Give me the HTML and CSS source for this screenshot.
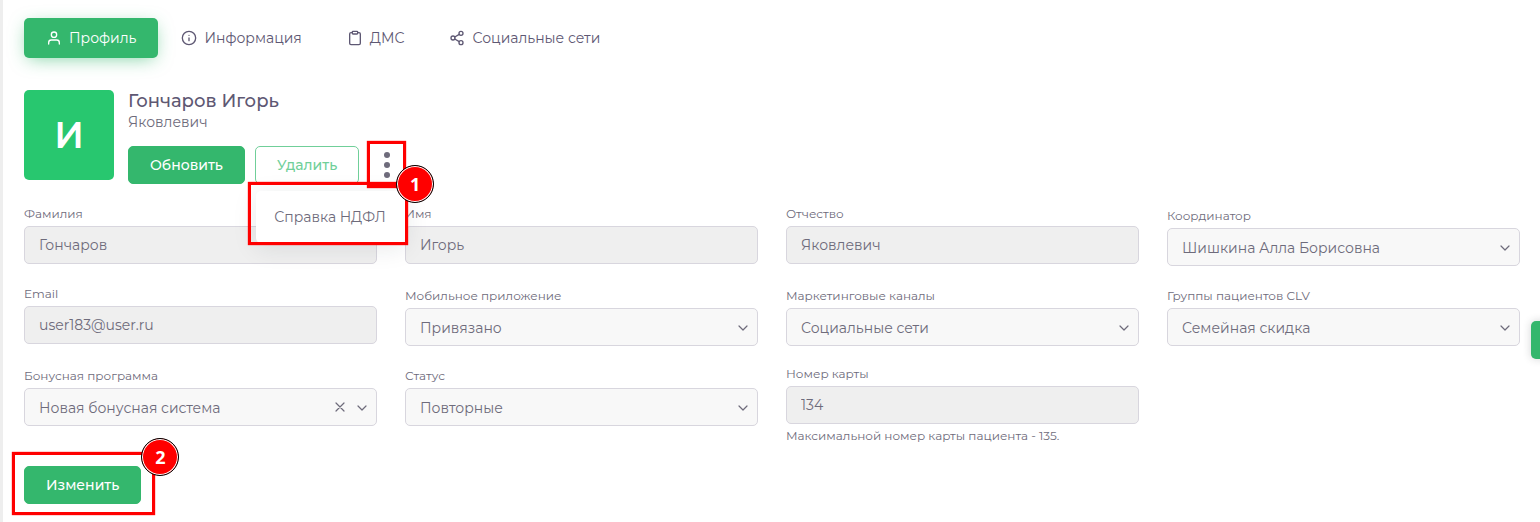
FILE: index.html
```html
<!DOCTYPE html>
<html lang="ru">
<head>
    <meta charset="UTF-8">
    <meta name="viewport" content="width=device-width, initial-scale=1.0">
    <title>Профиль пациента</title>
    <link rel="stylesheet" href="styles.css">
</head>
<body>

    <main class="page">
        <nav class="tabs">
            <a href="#profile" class="tab active">
                <svg class="icon" viewBox="0 0 24 24"><path d="M20 21v-2a4 4 0 0 0-4-4H8a4 4 0 0 0-4 4v2"/><circle cx="12" cy="7" r="4"/></svg>
                Профиль
            </a>
            <a href="#info" class="tab">
                <svg class="icon" viewBox="0 0 24 24"><circle cx="12" cy="12" r="10"/><path d="M12 16v-4M12 8h.01"/></svg>
                Информация
            </a>
            <a href="#dms" class="tab">
                <svg class="icon" viewBox="0 0 24 24"><path d="M16 4h2a2 2 0 0 1 2 2v14a2 2 0 0 1-2 2H6a2 2 0 0 1-2-2V6a2 2 0 0 1 2-2h2"/><rect x="8" y="2" width="8" height="4" rx="1"/></svg>
                ДМС
            </a>
            <a href="#social" class="tab">
                <svg class="icon" viewBox="0 0 24 24"><circle cx="18" cy="5" r="3"/><circle cx="6" cy="12" r="3"/><circle cx="18" cy="19" r="3"/><path d="M8.59 13.51l6.83 3.98M15.41 6.51l-6.82 3.98"/></svg>
                Социальные сети
            </a>
        </nav>

        <header class="user">
            <div class="avatar">И</div>
            <div class="user-info">
                <h1>Гончаров Игорь</h1>
                <p>Яковлевич</p>
                <div class="actions">
                    <button type="button" class="btn">Обновить</button>
                    <button type="button" class="btn btn-outline">Удалить</button>
                    <div class="more">
                        <button type="button" class="dots" aria-label="Ещё">
                            <svg viewBox="0 0 8 28"><circle cx="4" cy="4" r="3"/><circle cx="4" cy="14" r="3"/><circle cx="4" cy="24" r="3"/></svg>
                        </button>
                        <div class="menu">
                            <a href="#ndfl">Справка НДФЛ</a>
                        </div>
                        <span class="mark mark-dots"></span>
                        <span class="mark mark-menu"></span>
                        <span class="step step-1">1</span>
                    </div>
                </div>
            </div>
        </header>

        <form>
            <div class="fields">
                <div class="field">
                    <label for="surname">Фамилия</label>
                    <input type="text" id="surname" value="Гончаров" disabled>
                </div>
                <div class="field">
                    <label for="name">Имя</label>
                    <input type="text" id="name" value="Игорь" disabled>
                </div>
                <div class="field">
                    <label for="patronymic">Отчество</label>
                    <input type="text" id="patronymic" value="Яковлевич" disabled>
                </div>
                <div class="field field-select">
                    <label for="coordinator">Координатор</label>
                    <div class="select">
                        <select id="coordinator"><option>Шишкина Алла Борисовна</option></select>
                        <svg class="chevron" viewBox="0 0 10 6"><path d="M1 1l4 4 4-4"/></svg>
                    </div>
                </div>

                <div class="field">
                    <label for="email">Email</label>
                    <input type="email" id="email" value="user183@user.ru" disabled>
                </div>
                <div class="field field-select">
                    <label for="app">Мобильное приложение</label>
                    <div class="select">
                        <select id="app"><option>Привязано</option></select>
                        <svg class="chevron" viewBox="0 0 10 6"><path d="M1 1l4 4 4-4"/></svg>
                    </div>
                </div>
                <div class="field field-select">
                    <label for="channels">Маркетинговые каналы</label>
                    <div class="select">
                        <select id="channels"><option>Социальные сети</option></select>
                        <svg class="chevron" viewBox="0 0 10 6"><path d="M1 1l4 4 4-4"/></svg>
                    </div>
                </div>
                <div class="field field-select">
                    <label for="clv">Группы пациентов CLV</label>
                    <div class="select">
                        <select id="clv"><option>Семейная скидка</option></select>
                        <svg class="chevron" viewBox="0 0 10 6"><path d="M1 1l4 4 4-4"/></svg>
                    </div>
                </div>

                <div class="field field-select">
                    <label for="bonus">Бонусная программа</label>
                    <div class="select">
                        <select id="bonus"><option>Новая бонусная система</option></select>
                        <button type="button" class="clear" aria-label="Очистить">
                            <svg viewBox="0 0 10 10"><path d="M1 1l8 8M9 1L1 9"/></svg>
                        </button>
                        <svg class="chevron" viewBox="0 0 10 6"><path d="M1 1l4 4 4-4"/></svg>
                    </div>
                </div>
                <div class="field field-select">
                    <label for="status">Статус</label>
                    <div class="select">
                        <select id="status"><option>Повторные</option></select>
                        <svg class="chevron" viewBox="0 0 10 6"><path d="M1 1l4 4 4-4"/></svg>
                    </div>
                </div>
                <div class="field">
                    <label for="card">Номер карты</label>
                    <input type="text" id="card" value="134" disabled>
                    <small>Максимальной номер карты пациента - 135.</small>
                </div>
            </div>

            <div class="submit">
                <button type="submit" class="btn">Изменить</button>
                <span class="mark mark-submit"></span>
                <span class="step step-2">2</span>
            </div>
        </form>
    </main>

    <button type="button" class="side-button" aria-label="Открыть панель"></button>

</body>
</html>
```

FILE: styles.css
```css
* {
    box-sizing: border-box;
}
body {
    margin: 0;
    font-family: Montserrat, Inter, sans-serif;
    font-size: 14px;
    line-height: 20px;
    color: #6e6b7b;
    background-color: #fff;
    overflow-x: hidden;
}
.page {
    min-height: 100vh;
    padding: 18px 20px 18px 21px;
    border-left: 3px solid #eee;
}
button, input, select {
    font-family: inherit;
    font-size: inherit;
    color: inherit;
}
svg {
    display: block;
    fill: none;
    stroke: currentColor;
    stroke-linecap: round;
    stroke-linejoin: round;
}

/* Tabs */
.tabs {
    display: flex;
    gap: 1px;
    margin-bottom: 32px;
}
.tab {
    display: flex;
    align-items: center;
    gap: 7px;
    height: 40px;
    padding: 0 22px;
    border-radius: 5px;
    color: #5e5873;
    text-decoration: none;
}
.tab.active {
    background-color: #34b76d;
    color: #fff;
    box-shadow: 0 4px 18px -4px rgba(52, 183, 109, 0.65);
}
.icon {
    width: 16px;
    height: 16px;
    stroke-width: 2;
}

/* User header */
.user {
    display: flex;
    gap: 14px;
    margin-bottom: 20px;
}
.avatar {
    display: flex;
    align-items: center;
    justify-content: center;
    width: 90px;
    height: 90px;
    border-radius: 5px;
    background-color: #28c76f;
    color: #fff;
    font-size: 36px;
    font-weight: 600;
}
.user h1 {
    margin: 0;
    font-size: 18px;
    font-weight: 500;
    line-height: 22px;
    color: #5e5873;
}
.user p {
    margin: 0 0 14px;
}
.actions {
    display: flex;
    gap: 10px;
}
.btn {
    height: 38px;
    padding: 0 21px;
    border: 1px solid #34b76d;
    border-radius: 5px;
    background-color: #34b76d;
    color: #fff;
    font-weight: 500;
    cursor: pointer;
}
.btn-outline {
    background-color: transparent;
    border-color: #70cf99;
    color: #70cf99;
}
.more {
    position: relative;
    height: 38px;
}
.dots {
    width: 36px;
    height: 38px;
    padding: 0 14px;
    border: none;
    background: none;
    cursor: pointer;
}
.dots svg {
    width: 8px;
    height: 28px;
    fill: #6e6b7b;
    stroke: none;
}
.menu {
    position: absolute;
    top: 45px;
    right: 0;
    z-index: 1;
    min-width: 149px;
    padding: 10px 0;
    border-radius: 5px;
    background-color: #fff;
    box-shadow: 0 5px 25px rgba(34, 41, 47, 0.1);
}
.menu a {
    display: block;
    padding: 6px 18px;
    color: #6e6b7b;
    text-decoration: none;
    white-space: nowrap;
}

/* Fields */
.fields {
    display: grid;
    grid-template-columns: repeat(4, 1fr);
    gap: 18px 28px;
}
.field-select {
    padding-top: 2px;
}
.field label {
    display: block;
    margin-bottom: 2px;
    font-size: 12px;
    line-height: 20px;
}
.field input,
.field select {
    display: block;
    width: 100%;
    height: 38px;
    padding: 0 14px;
    border: 1px solid #d8d6de;
    border-radius: 5px;
    background-color: #efefef;
}
.field select {
    appearance: none;
    padding-top: 2px;
    background-color: #f8f8f8;
}
.field small {
    display: block;
    margin-top: 2px;
    font-size: 12px;
    line-height: 20px;
}
.select {
    position: relative;
}
.chevron {
    position: absolute;
    top: 17px;
    right: 10px;
    width: 10px;
    height: 6px;
    stroke-width: 1.2;
    pointer-events: none;
}
.clear {
    position: absolute;
    top: 14px;
    right: 32px;
    padding: 0;
    border: none;
    background: none;
    cursor: pointer;
}
.clear svg {
    width: 10px;
    height: 10px;
    stroke-width: 1.2;
}
.submit {
    position: relative;
    width: fit-content;
    margin-top: 20px;
}

/* Step highlights */
.mark {
    position: absolute;
    z-index: 2;
    border: 3px solid #f00;
    box-shadow: 0 0 1px #f00;
    pointer-events: none;
}
.mark-dots {
    top: -5px;
    left: -2px;
    width: 39px;
    height: 47px;
}
.mark-menu {
    top: 36px;
    right: -3px;
    width: 160px;
    height: 63px;
}
.mark-submit {
    inset: -14px -14px -11px -12px;
}
.step {
    position: absolute;
    z-index: 3;
    width: 38px;
    height: 38px;
    border: 1px solid #000;
    border-radius: 50%;
    background-color: #f00;
    box-shadow: inset 0 0 0 1px #fff;
    color: #fff;
    font-family: "Open Sans", sans-serif;
    font-size: 18px;
    font-weight: 700;
    line-height: 36px;
    text-align: center;
}
.step-1 {
    top: 19px;
    left: 27px;
}
.step-2 {
    top: -28px;
    right: -38px;
}

.side-button {
    position: fixed;
    top: 321px;
    right: -29px;
    width: 38px;
    height: 38px;
    border: none;
    border-radius: 5px;
    background-color: #34b76d;
    box-shadow: 0 0 8px rgba(34, 41, 47, 0.2);
}
```
